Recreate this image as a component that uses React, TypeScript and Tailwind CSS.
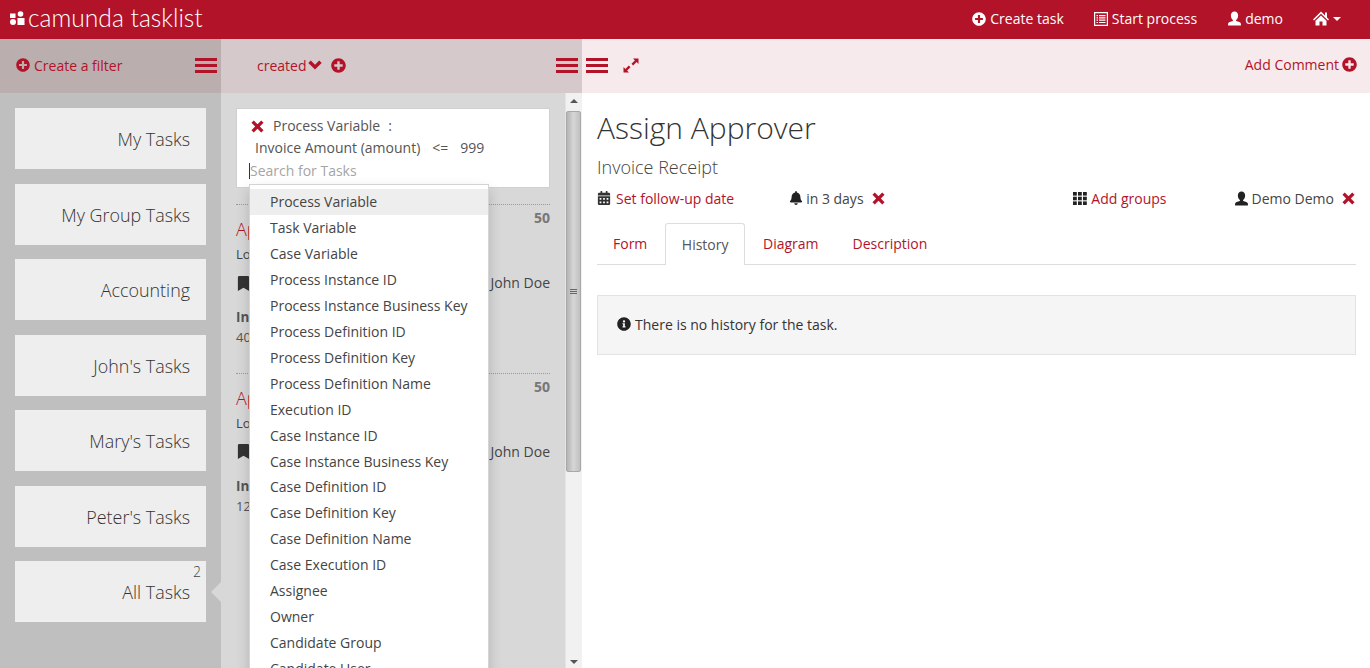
import { FaPlusCircle, FaBookmark, FaCalendarAlt, FaBell, FaInfoCircle } from 'react-icons/fa';

const filters = ["My Tasks", "My Group Tasks", "Accounting", "John's Tasks", "Mary's Tasks", "Peter's Tasks", "All Tasks"];

const searchOptions = [
    "Process Variable", "Task Variable", "Case Variable", "Process Instance ID", "Process Instance Business Key",
    "Process Definition ID", "Process Definition Key", "Process Definition Name", "Execution ID", "Case Instance ID",
    "Case Instance Business Key", "Case Definition ID", "Case Definition Key", "Case Definition Name", "Case Execution ID",
    "Assignee", "Owner", "Candidate Group", "Candidate User",
];

function Burger() {
    return (
        <span className="flex w-[22px] flex-col gap-[3px]">
            <span className="h-[3px] bg-[#b31329]" />
            <span className="h-[3px] bg-[#b31329]" />
            <span className="h-[3px] bg-[#b31329]" />
        </span>
    );
}

function Logo() {
    return (
        <svg width="15" height="14" viewBox="0 0 15 14" fill="#fff">
            <rect x="0" y="2.5" width="5.5" height="4.5" />
            <circle cx="10.5" cy="3" r="2.8" />
            <circle cx="3" cy="11" r="3" />
            <rect x="7.5" y="7" width="7" height="7" />
        </svg>
    );
}

function CloseIcon({ className = "" }: { className?: string }) {
    return (
        <svg width="13" height="13" viewBox="0 0 14 14" fill="#b31329" className={className}>
            <path d="M3 .5L7 4.5L11 .5L13.5 3L9.5 7L13.5 11L11 13.5L7 9.5L3 13.5L.5 11L4.5 7L.5 3Z" />
        </svg>
    );
}

function UserIcon({ color, className = "" }: { color: string; className?: string }) {
    return (
        <svg width="15" height="15" viewBox="0 0 14 14" fill={color} className={className}>
            <path d="M7 .5c2.2 0 3.4 1.6 3.4 3.8 0 1.8-.9 3.4-1.9 4.1v1c2 .5 4.5 1.3 4.5 2.4v1.7H1v-1.7c0-1.1 2.5-1.9 4.5-2.4v-1c-1-.7-1.9-2.3-1.9-4.1C3.6 2.1 4.8.5 7 .5z" />
        </svg>
    );
}

function HomeIcon() {
    return (
        <svg width="16" height="15" viewBox="0 0 16 15" fill="#fff">
            <path d="M8 .5L12 4.5V1.5H14V6.5L16 8.5L15 9.5L8 2.8L1 9.5L0 8.5Z" />
            <path d="M8 4.5L13.5 9.8V14.5H9.5V10.5H6.5V14.5H2.5V9.8Z" />
        </svg>
    );
}

function ListIcon() {
    return (
        <svg width="14" height="14" viewBox="0 0 14 14" fill="#fff">
            <path fillRule="evenodd" d="M0 0H14V14H0ZM1.2 1.2V12.8H12.8V1.2Z" />
            <path d="M2.5 3H4V4.2H2.5ZM5 3H11.5V4.2H5ZM2.5 5.3H4V6.5H2.5ZM5 5.3H11.5V6.5H5ZM2.5 7.6H4V8.8H2.5ZM5 7.6H11.5V8.8H5ZM2.5 9.9H4V11.1H2.5ZM5 9.9H11.5V11.1H5Z" />
        </svg>
    );
}

function ChevronIcon() {
    return (
        <svg width="14" height="10" viewBox="0 0 14 10" fill="#b31329" className="ml-[1px]">
            <path d="M.3 3L2.8.6L7 4.7L11.2.6L13.7 3L7 9.5Z" />
        </svg>
    );
}

function ThIcon() {
    return (
        <svg width="14" height="13" viewBox="0 0 14 13" fill="#222">
            {[0, 5, 10].map((x) => (
                <g key={x}>
                    <rect x={x} y="0" width="3.8" height="3.6" />
                    <rect x={x} y="4.7" width="3.8" height="3.6" />
                    <rect x={x} y="9.4" width="3.8" height="3.6" />
                </g>
            ))}
        </svg>
    );
}

function ExpandIcon() {
    return (
        <svg width="16" height="15" viewBox="0 0 16 15" fill="#b31329">
            <path d="M10 .5H15.5V6L13.6 4.1L10.2 7.5L8.5 5.8L11.9 2.4Z" />
            <path d="M6 14.5H.5V9L2.4 10.9L5.8 7.5L7.5 9.2L4.1 12.6Z" />
        </svg>
    );
}

function TaskCard({ amount }: { amount: string }) {
    return (
        <div className="relative h-[168.5px] border-t border-dotted border-[#999]">
            <div className="absolute right-0 top-[2px] text-[14px] font-bold text-[#777]">50</div>
            <div className="pt-[12px] text-[18px] font-light leading-[24px] text-[#b31329]">Ap</div>
            <div className="pt-[4px] text-[13px] leading-[18px] text-[#444]">Lo</div>
            <div className="flex items-center justify-between pt-[10px] text-[14px] leading-[20px] text-[#444]">
                <FaBookmark className="text-[15px] text-[#333]" />
                <span>John Doe</span>
            </div>
            <div className="pt-[15px] text-[13.5px] font-bold leading-[18px] text-[#555]">Inv</div>
            <div className="pt-[2px] text-[13px] leading-[18px] text-[#555]">{amount}</div>
        </div>
    );
}

export default function App() {
    return (
        <div className="flex h-[668px] w-[1370px] flex-col overflow-hidden bg-white font-['Open_Sans',sans-serif] text-[14px] text-[#444]">
            <header className="flex h-[39px] shrink-0 items-start justify-between bg-[#b31329] pl-[10px] pr-[29px] text-white">
                <div className="flex items-center gap-[3px] pt-[4px]">
                    <Logo />
                    <span className="font-['Lato',sans-serif] text-[24.6px] font-light leading-[28px]">camunda tasklist</span>
                </div>
                <nav className="flex h-[37px] items-center gap-[30px]">
                    <span className="flex items-center gap-[4px]"><FaPlusCircle className="text-[14px]" />Create task</span>
                    <span className="flex items-center gap-[4px]"><ListIcon />Start process</span>
                    <span className="flex items-center gap-[3px]"><UserIcon color="#fff" />demo</span>
                    <span className="flex items-center gap-[4px]">
                        <HomeIcon />
                        <span className="h-0 w-0 border-x-[4px] border-t-[4px] border-x-transparent border-t-white" />
                    </span>
                </nav>
            </header>

            <div className="flex min-h-0 flex-1">
                <aside className="flex w-[221px] shrink-0 flex-col bg-[#bfbfbf]">
                    <div className="flex h-[54px] shrink-0 items-center justify-between bg-[#baaeaf] pb-[2px] pl-[16px] pr-[4px] text-[#b31329]">
                        <span className="flex items-center gap-[4px]"><FaPlusCircle className="text-[14px]" />Create a filter</span>
                        <Burger />
                    </div>
                    <div className="flex flex-col gap-[14.5px] pl-[15px] pr-[15px] pt-[15px]">
                        {filters.map((name) => (
                            <div key={name} className="relative flex h-[61px] items-center justify-end bg-[#eeeeee] pr-[16px] pt-[2px] text-[17.9px] font-light text-[#333]">
                                {name}
                                {name === "All Tasks" && (
                                    <>
                                        <span className="absolute right-[5px] top-[2px] text-[14px] leading-[18px] text-[#444]">2</span>
                                        <span className="absolute right-[-15px] top-[21px] h-0 w-0 border-y-[10px] border-r-[10px] border-y-transparent border-r-[#d8d8d8]" />
                                    </>
                                )}
                            </div>
                        ))}
                    </div>
                </aside>

                <section className="flex w-[361px] shrink-0 flex-col bg-[#d8d8d8]">
                    <div className="flex h-[54px] shrink-0 items-center justify-between bg-[#d5c9cb] pb-[2px] pl-[36px] pr-[4px] text-[#b31329]">
                        <span className="flex items-center">
                            created
                            <ChevronIcon />
                            <FaPlusCircle className="ml-[9px] text-[15px]" />
                        </span>
                        <Burger />
                    </div>
                    <div className="flex min-h-0 flex-1">
                        <div className="relative w-[344px] shrink-0 pl-[15px] pr-[15px] pt-[15px]">
                            <div className="relative h-[80px] border border-[#d0d0d0] bg-white pl-[14px] pt-[6px] leading-[22px] text-[#555]">
                                <div className="flex items-center">
                                    <CloseIcon />
                                    <span className="ml-[9px]">Process Variable</span>
                                    <span className="ml-[8px]">:</span>
                                </div>
                                <div className="pl-[4px]">
                                    Invoice Amount (amount)
                                    <span className="ml-[12px]">&lt;=</span>
                                    <span className="ml-[12px]">999</span>
                                </div>
                                <div className="ml-[-2px] mt-[1px] flex h-[22px] items-center text-[#a5a5a5]">
                                    <span className="h-[16px] w-px bg-[#333]" />
                                    Search for Tasks
                                </div>
                            </div>
                            <div className="pt-[16px]">
                                <TaskCard amount="40" />
                                <TaskCard amount="12" />
                            </div>
                            <ul className="absolute left-[28px] top-[91px] w-[240px] border border-[#d4d4d4] bg-white pt-[4px] text-[#444] shadow-[0_6px_12px_rgba(0,0,0,0.18)]">
                                {searchOptions.map((option, i) => (
                                    <li key={option} className={`h-[25.96px] pl-[20px] leading-[26px] ${i === 0 ? 'bg-[#eeeeee]' : ''}`}>{option}</li>
                                ))}
                            </ul>
                        </div>
                        <div className="relative w-[17px] shrink-0 border-l border-[#e4e4e4] bg-[#f1f1f1]">
                            <span className="absolute left-[4px] top-[6px] h-0 w-0 border-x-[4px] border-b-[4px] border-x-transparent border-b-[#555]" />
                            <div className="absolute left-0 right-[1px] top-[18px] flex h-[361px] items-center justify-center rounded-[2px] border border-[#a8a8a8] bg-gradient-to-r from-[#b4b4b4] via-[#d6d6d6] to-[#c0c0c0]">
                                <span className="flex w-[7px] flex-col gap-[1px]">
                                    <span className="h-px bg-[#666]" />
                                    <span className="h-px bg-[#666]" />
                                    <span className="h-px bg-[#666]" />
                                </span>
                            </div>
                            <span className="absolute bottom-[4px] left-[4px] h-0 w-0 border-x-[4px] border-t-[4px] border-x-transparent border-t-[#555]" />
                        </div>
                    </div>
                </section>

                <main className="flex min-w-0 flex-1 flex-col">
                    <div className="flex h-[54px] shrink-0 items-center justify-between bg-[#f7eaec] pb-[2px] pl-[4px] pr-[13px] text-[#b31329]">
                        <div className="flex items-center gap-[15px]">
                            <Burger />
                            <ExpandIcon />
                        </div>
                        <span className="flex items-center gap-[3px] pb-[2px] pr-[0px]">Add Comment<FaPlusCircle className="text-[15px]" /></span>
                    </div>
                    <div className="pl-[15px] pr-[14px] pt-[15px]">
                        <h1 className="text-[30px] font-light leading-[40px] text-[#333]">Assign Approver</h1>
                        <h2 className="pt-[7px] text-[18px] font-light leading-[24px] text-[#444]">Invoice Receipt</h2>
                        <div className="mt-[9px] flex h-[20px] items-center">
                            <FaCalendarAlt className="text-[14px] text-[#333]" />
                            <span className="ml-[5px] text-[#b31329]">Set follow-up date</span>
                            <FaBell className="ml-[55px] text-[14px] text-[#222]" />
                            <span className="ml-[3px]">in 3 days</span>
                            <CloseIcon className="ml-[8px]" />
                            <span className="ml-auto flex items-center">
                                <ThIcon />
                                <span className="ml-[4px] text-[#b31329]">Add groups</span>
                            </span>
                            <span className="ml-[67px] mr-[1px] flex items-center">
                                <UserIcon color="#222" />
                                <span className="ml-[3px]">Demo Demo</span>
                                <CloseIcon className="ml-[8px]" />
                            </span>
                        </div>
                        <div className="mt-[15px] flex h-[42px] border-b border-[#dddddd]">
                            <span className="flex items-center px-[16px] text-[#b31329]">Form</span>
                            <span className="mb-[-1px] ml-[2px] flex items-center rounded-t-[3px] border border-b-0 border-[#dddddd] bg-white px-[15.5px] text-[#555]">History</span>
                            <span className="ml-[2px] flex items-center px-[16px] text-[#b31329]">Diagram</span>
                            <span className="ml-[2px] flex items-center px-[16px] text-[#b31329]">Description</span>
                        </div>
                        <div className="mt-[30px] flex h-[60px] items-center gap-[4px] border border-[#e3e3e3] bg-[#f5f5f5] pb-[2px] pl-[19px] text-[#333]">
                            <FaInfoCircle className="text-[14px] text-[#222]" />
                            There is no history for the task.
                        </div>
                    </div>
                </main>
            </div>
        </div>
    );
}
